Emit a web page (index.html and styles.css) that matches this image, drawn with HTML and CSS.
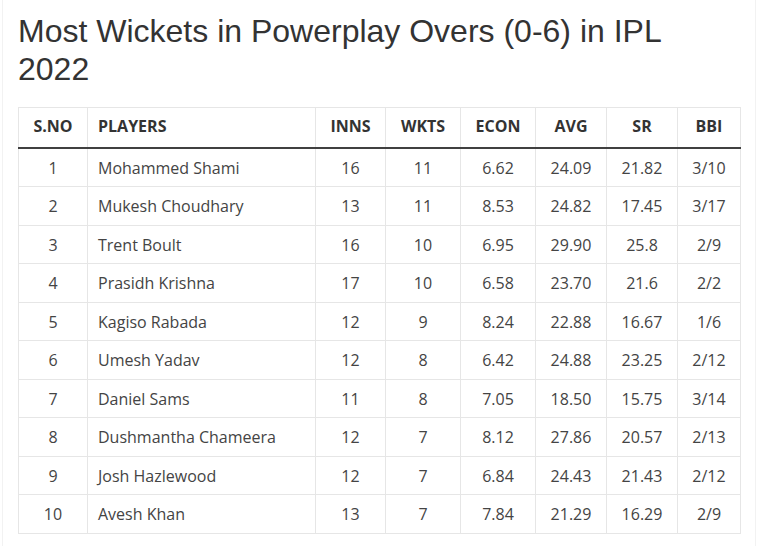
FILE: index.html
```html
<!DOCTYPE html>
<html>
<head>
<meta charset="utf-8">
<link rel="stylesheet" href="styles.css">
</head>
<body>
<div class="page">
  <h1 class="title">Most Wickets in Powerplay Overs (0-6) in IPL 2022</h1>
  <table class="stats">
    <colgroup>
      <col class="c-sno"><col class="c-player"><col class="c-inns"><col class="c-wkts"><col class="c-econ"><col class="c-avg"><col class="c-sr"><col class="c-bbi">
    </colgroup>
    <thead>
      <tr><th>S.NO</th><th class="left">PLAYERS</th><th>INNS</th><th>WKTS</th><th>ECON</th><th>AVG</th><th>SR</th><th>BBI</th></tr>
    </thead>
    <tbody>
      <tr><td>1</td><td class="left">Mohammed Shami</td><td>16</td><td>11</td><td>6.62</td><td>24.09</td><td>21.82</td><td>3/10</td></tr>
      <tr><td>2</td><td class="left">Mukesh Choudhary</td><td>13</td><td>11</td><td>8.53</td><td>24.82</td><td>17.45</td><td>3/17</td></tr>
      <tr><td>3</td><td class="left">Trent Boult</td><td>16</td><td>10</td><td>6.95</td><td>29.90</td><td>25.8</td><td>2/9</td></tr>
      <tr><td>4</td><td class="left">Prasidh Krishna</td><td>17</td><td>10</td><td>6.58</td><td>23.70</td><td>21.6</td><td>2/2</td></tr>
      <tr><td>5</td><td class="left">Kagiso Rabada</td><td>12</td><td>9</td><td>8.24</td><td>22.88</td><td>16.67</td><td>1/6</td></tr>
      <tr><td>6</td><td class="left">Umesh Yadav</td><td>12</td><td>8</td><td>6.42</td><td>24.88</td><td>23.25</td><td>2/12</td></tr>
      <tr><td>7</td><td class="left">Daniel Sams</td><td>11</td><td>8</td><td>7.05</td><td>18.50</td><td>15.75</td><td>3/14</td></tr>
      <tr><td>8</td><td class="left">Dushmantha Chameera</td><td>12</td><td>7</td><td>8.12</td><td>27.86</td><td>20.57</td><td>2/13</td></tr>
      <tr><td>9</td><td class="left">Josh Hazlewood</td><td>12</td><td>7</td><td>6.84</td><td>24.43</td><td>21.43</td><td>2/12</td></tr>
      <tr><td>10</td><td class="left">Avesh Khan</td><td>13</td><td>7</td><td>7.84</td><td>21.29</td><td>16.29</td><td>2/9</td></tr>
    </tbody>
  </table>
</div>
</body>
</html>
```
FILE: styles.css
```css
html, body {
  margin: 0;
  padding: 0;
  background: #fff;
}
.page {
  box-sizing: border-box;
  margin-left: 2px;
  width: 754px;
  min-height: 546px;
  border-left: 1px solid #f2f2f2;
  border-right: 1px solid #f2f2f2;
  padding: 12px 15px 12px 15px;
}
.title {
  margin: 0 0 18px 0;
  font-family: "Liberation Sans", Arial, sans-serif;
  font-weight: normal;
  font-size: 32px;
  line-height: 38.4px;
  color: #333;
}
.stats {
  border-collapse: collapse;
  table-layout: fixed;
  width: 722px;
  font-family: "Open Sans", sans-serif;
  font-size: 16px;
  line-height: 21.5px;
  color: #444;
  border: 1px solid #e6e6e6;
}
.c-sno { width: 69px; }
.c-player { width: 228px; }
.c-inns { width: 70px; }
.c-wkts { width: 75px; }
.c-econ { width: 75px; }
.c-avg { width: 71px; }
.c-sr { width: 71px; }
.c-bbi { width: 63px; }
.stats th, .stats td {
  border: 1px solid #e6e6e6;
  padding: 8px 0;
  text-align: center;
  white-space: nowrap;
}
.stats td {
  padding-top: 9px;
  padding-bottom: 7px;
}
.stats th {
  font-weight: bold;
  color: #333;
  line-height: 22px;
  padding-top: 7px;
  padding-bottom: 10px;
  border-bottom: 2px solid #404040;
}
.stats .left {
  text-align: left;
  padding-left: 10px;
}
```
